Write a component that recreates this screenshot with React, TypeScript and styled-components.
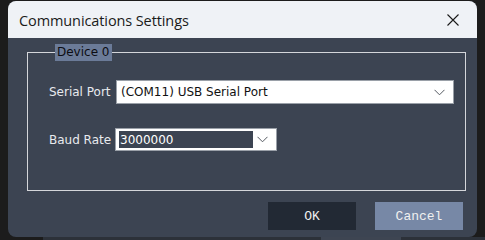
import React from "react";
import styled, { createGlobalStyle } from "styled-components";

const Global = createGlobalStyle`
  html, body { margin: 0; padding: 0; background: #1c1c1c; }
  body { width: 485px; height: 240px; overflow: hidden; }
`;

const Page = styled.div`
  width: 485px;
  height: 240px;
  display: flex;
  flex-direction: column;
`;

const Window = styled.div`
  margin: 1px 0 0 8px;
  width: 469px;
  height: 236px;
  border-radius: 8px;
  overflow: hidden;
  display: flex;
  flex-direction: column;
  background: #3c4452;
  flex: none;
`;

const TitleBar = styled.div`
  height: 37px;
  flex: none;
  background: #eff2f6;
  display: flex;
  align-items: center;
  justify-content: space-between;
  padding: 0 17px 0 11px;
`;

const Title = styled.div`
  font-family: "Open Sans", "Noto Sans", sans-serif;
  font-size: 14.5px;
  color: #1a1a1a;
  letter-spacing: -0.1px;
  padding-top: 1px;
`;

const CloseButton = styled.div`
  width: 14px;
  height: 14px;
  display: flex;
  align-items: center;
  justify-content: center;
`;

const Body = styled.div`
  flex: 1;
  display: flex;
  flex-direction: column;
  padding: 6px 11px 0 18px;
`;

const Group = styled.fieldset`
  margin: 0 0 0 1px;
  padding: 19px 0 0 21px;
  border: 1px solid #d4d6da;
  width: 439px;
  height: 147px;
  box-sizing: border-box;
  display: flex;
  flex-direction: column;
  gap: 24px;
`;

const Legend = styled.legend`
  margin-left: 6px;
  padding: 0 2px;
  height: 17px;
  line-height: 17px;
  background: #6b7b98;
  color: #0d0d12;
  font-family: "DejaVu Sans", sans-serif;
  font-size: 12px;
`;

const Row = styled.div`
  display: flex;
  align-items: center;
`;

const Label = styled.div`
  width: 67px;
  flex: none;
  font-family: "DejaVu Sans", sans-serif;
  font-size: 12px;
  color: #e8eaee;
`;

const Combo = styled.div<{ $width: number; $height: number }>`
  width: ${(p) => p.$width}px;
  height: ${(p) => p.$height}px;
  box-sizing: border-box;
  background: #ffffff;
  border: 1px solid #9aa0a8;
  display: flex;
  align-items: center;
  padding: 0 8px 0 3px;
  gap: 4px;
`;

const ComboText = styled.div<{ $selected?: boolean }>`
  flex: 1;
  align-self: stretch;
  display: flex;
  align-items: center;
  padding-left: 1px;
  margin: ${(p) => (p.$selected ? "2px 0" : "0")};
  background: ${(p) => (p.$selected ? "#3c4452" : "transparent")};
  color: ${(p) => (p.$selected ? "#ffffff" : "#111111")};
  font-family: "DejaVu Sans", sans-serif;
  font-size: 12px;
`;

const Footer = styled.div`
  display: flex;
  justify-content: flex-end;
  gap: 19px;
  padding: 11px 3px 0 0;
`;

const Button = styled.div<{ $primary?: boolean }>`
  width: 88px;
  height: 28px;
  display: flex;
  align-items: center;
  justify-content: center;
  background: ${(p) => (p.$primary ? "#222934" : "#7788a6")};
  color: #f0f0f0;
  font-family: "Liberation Mono", monospace;
  font-size: 13px;
`;

const Backdrop = styled.div`
  flex: 1;
  display: flex;
  background: #2c3139;
`;

const BackdropEdge = styled.div`
  width: 43px;
  background: #1c1c1c;
`;

const BackdropButton = styled.div`
  margin-left: 278px;
  width: 80px;
  background: #3e4552;
`;

const Chevron = () => (
  <svg width="11" height="7" viewBox="0 0 11 7">
    <path d="M0.5 0.8 L5.5 5.8 L10.5 0.8" fill="none" stroke="#555a62" strokeWidth="1" />
  </svg>
);

export default function App() {
  return (
    <Page>
      <Global />
      <Window>
        <TitleBar>
          <Title>Communications Settings</Title>
          <CloseButton>
            <svg width="12" height="12" viewBox="0 0 12 12">
              <path d="M0.5 0.5 L11.5 11.5 M11.5 0.5 L0.5 11.5" stroke="#1a1a1a" strokeWidth="1.1" />
            </svg>
          </CloseButton>
        </TitleBar>
        <Body>
          <Group>
            <Legend>Device 0</Legend>
            <Row>
              <Label>Serial Port</Label>
              <Combo $width={338} $height={24}>
                <ComboText>(COM11) USB Serial Port</ComboText>
                <Chevron />
              </Combo>
            </Row>
            <Row>
              <Label>Baud Rate</Label>
              <Combo $width={162} $height={23} style={{ marginLeft: -1 }}>
                <ComboText $selected>3000000</ComboText>
                <Chevron />
              </Combo>
            </Row>
          </Group>
          <Footer>
            <Button $primary>OK</Button>
            <Button>Cancel</Button>
          </Footer>
        </Body>
      </Window>
      <Backdrop>
        <BackdropEdge />
        <BackdropButton />
      </Backdrop>
    </Page>
  );
}
